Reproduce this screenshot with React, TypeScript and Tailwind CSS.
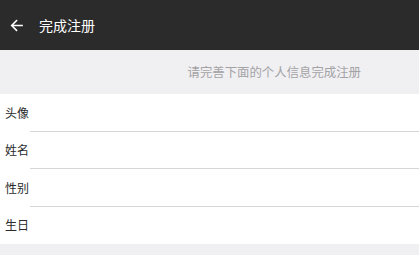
import React from 'react';

const fields = ['头像', '姓名', '性别', '生日'];

const App: React.FC = () => {
  return (
    <div
      className="w-[419px] h-[255px] bg-[#f0eff2] overflow-hidden"
      style={{ fontFamily: '"Noto Sans CJK SC", "Noto Sans", sans-serif' }}
    >
      <header className="h-[50px] bg-[#2b2b2b] flex items-center pl-[10px]">
        <svg width="13" height="13" viewBox="0 0 14 14" fill="none" className="mr-[16px]">
          <path d="M13 7H2M7 1.8L1.8 7L7 12.2" stroke="#fff" strokeWidth="1.7" strokeLinecap="square" />
        </svg>
        <h1 className="text-[14px] text-white leading-none">完成注册</h1>
      </header>

      <div className="h-[44px] flex items-center justify-end pr-[58px]">
        <p className="text-[12.4px] text-[#a3a3a6] leading-none">请完善下面的个人信息完成注册</p>
      </div>

      <div className="bg-white">
        {fields.map((label, index) => (
          <div key={label} className="flex">
            <div className="w-[30px] h-[37.5px] flex items-center pl-[5px]">
              <span className="text-[12px] text-[#2a2a2a] leading-none whitespace-nowrap">{label}</span>
            </div>
            <div
              className={
                index < fields.length - 1
                  ? 'flex-1 border-b border-[#d6d6d8]'
                  : 'flex-1'
              }
            />
          </div>
        ))}
      </div>
    </div>
  );
};

export default App;
